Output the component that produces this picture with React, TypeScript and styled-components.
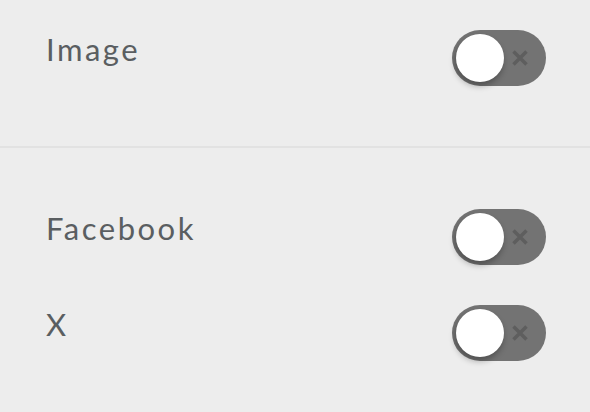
import styled, { createGlobalStyle } from "styled-components";
import { useState } from "react";

const GlobalStyle = createGlobalStyle`
  html, body {
    margin: 0;
    padding: 0;
    background: #ededed;
  }
  body {
    font-family: Lato, "Open Sans", sans-serif;
  }
`;

type Setting = {
  id: string;
  label: string;
};

const sections: Setting[][] = [
  [{ id: "image", label: "Image" }],
  [
    { id: "facebook", label: "Facebook" },
    { id: "x", label: "X" },
  ],
];

const Toggle: React.FC<{ on: boolean; onChange: () => void }> = ({ on, onChange }) => {
  return (
    <StyledTrack role="switch" aria-checked={on} onClick={onChange} $on={on}>
      <StyledThumb />
      <StyledCross viewBox="0 0 16 16">
        <path d="M1.5 1.5 L14.5 14.5 M14.5 1.5 L1.5 14.5" />
      </StyledCross>
    </StyledTrack>
  );
};

const App: React.FC = () => {
  const [values, setValues] = useState<Record<string, boolean>>({});

  const flip = (id: string) => setValues((v) => ({ ...v, [id]: !v[id] }));

  return (
    <>
      <GlobalStyle />
      <StyledPage>
        {sections.map((rows, i) => (
          <StyledSection key={i} $first={i === 0}>
            {rows.map((row) => (
              <StyledRow key={row.id}>
                <StyledLabel>{row.label}</StyledLabel>
                <Toggle on={!!values[row.id]} onChange={() => flip(row.id)} />
              </StyledRow>
            ))}
          </StyledSection>
        ))}
      </StyledPage>
    </>
  );
};

export default App;

const StyledPage = styled.div`
  width: 590px;
  height: 412px;
  background: #ededed;
  overflow: hidden;
`;

const StyledSection = styled.section<{ $first: boolean }>`
  display: flex;
  flex-direction: column;
  gap: 40px;
  padding: ${(p) => (p.$first ? "30px 44px 60px 46px" : "61px 44px 0 46px")};
  border-bottom: ${(p) => (p.$first ? "2px solid #e2e2e2" : "none")};
`;

const StyledRow = styled.div`
  display: flex;
  justify-content: space-between;
  align-items: flex-start;
  height: 56px;
`;

const StyledLabel = styled.span`
  margin-top: 4px;
  font-size: 31px;
  line-height: 30px;
  color: #5a5e61;
  letter-spacing: 2.5px;
`;

const StyledTrack = styled.button<{ $on: boolean }>`
  display: flex;
  align-items: center;
  box-sizing: border-box;
  width: 94px;
  height: 56px;
  padding: 4px;
  border: none;
  border-radius: 28px;
  background: ${(p) => (p.$on ? "#4caf50" : "#737373")};
  cursor: pointer;
`;

const StyledThumb = styled.span`
  width: 48px;
  height: 48px;
  border-radius: 50%;
  background: #ffffff;
  box-shadow: -1px 4px 6px rgba(0, 0, 0, 0.3);
`;

const StyledCross = styled.svg`
  width: 16px;
  height: 16px;
  margin-left: 8px;
  fill: none;
  stroke: #5e5e5e;
  stroke-width: 3.5;
  filter: blur(0.4px);
`;
